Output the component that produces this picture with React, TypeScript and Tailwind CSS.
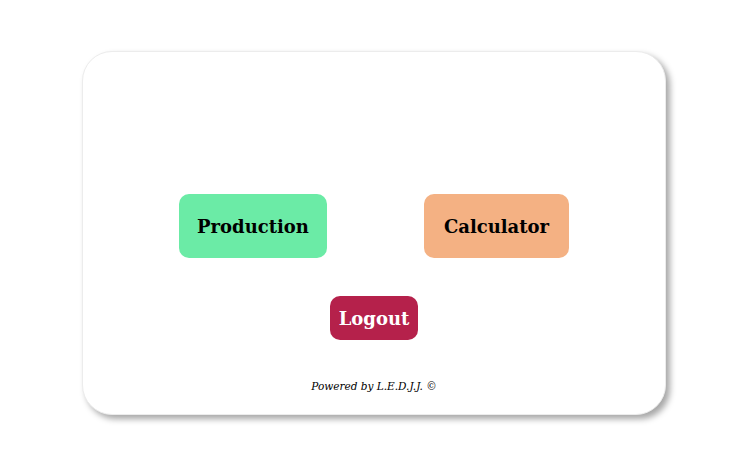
export default function App() {
  return (
    <div className="min-h-screen w-full bg-white flex pl-[82px] pt-[51px]">
      {/* Card */}
      <div
        className="w-[584px] h-[364px] bg-white rounded-[30px] border border-[#ececec] shadow-[4px_4px_6px_rgba(0,0,0,0.35)] flex flex-col items-center"
        style={{ fontFamily: "Rockwell, 'DejaVu Serif', serif" }}
      >
        <div className="mt-[142px] flex gap-[97px]">
          <button className="w-[148px] h-[64px] rounded-[10px] bg-[#6beba6] text-black font-bold text-[18px]">
            Production
          </button>
          <button className="w-[145px] h-[64px] rounded-[10px] bg-[#f4b183] text-black font-bold text-[18px]">
            Calculator
          </button>
        </div>
        <button className="mt-[38px] w-[88px] h-[44px] rounded-[10px] bg-[#b5214b] text-white font-bold text-[18px]">
          Logout
        </button>
        <p className="mt-[39px] text-[10.5px] italic text-black">Powered by L.E.D.J.J. ©</p>
      </div>
    </div>
  );
}
